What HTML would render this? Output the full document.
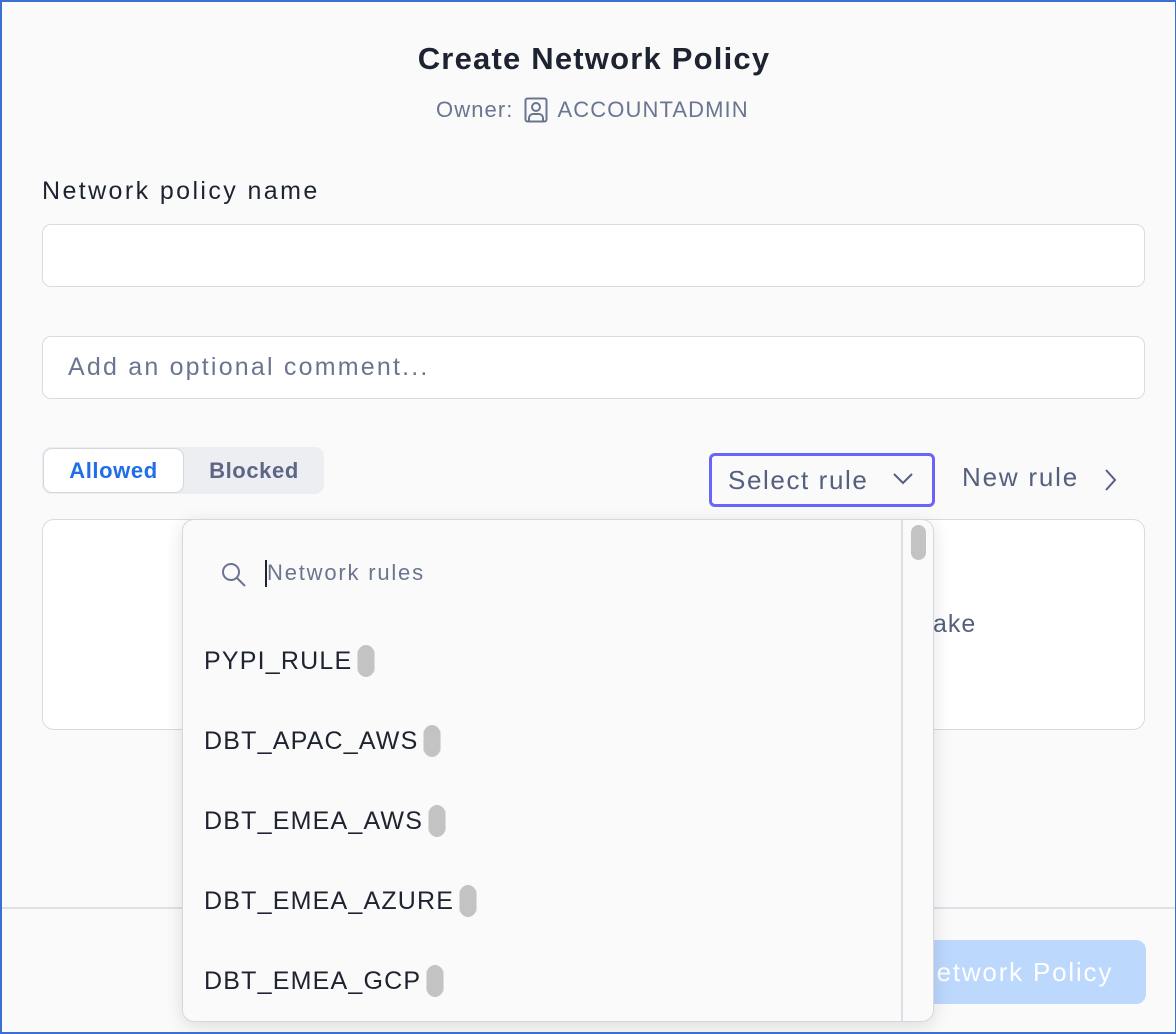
<!DOCTYPE html>
<html><head><meta charset="utf-8"><style>
*{box-sizing:border-box;margin:0;padding:0}
body{width:1176px;height:1034px;overflow:hidden;background:#fafafb;font-family:"Liberation Sans",sans-serif;position:relative}
.frame{position:absolute;inset:0;border:2px solid #3b6fd0;border-right-width:1px;pointer-events:none;z-index:10}
.abs{position:absolute}
.input{position:absolute;left:42px;width:1103px;height:63px;border:1px solid #d8dbe3;border-radius:9px;background:#fff}
.item{position:absolute;left:204px;font-size:25px;color:#1d2330;display:flex;align-items:center;letter-spacing:1.2px}
.pill{display:inline-block;width:16px;height:32px;background:#c3c3c3;border-radius:8px;margin-left:6px;box-shadow:-4px 0 0 -3px #ddd,4px 0 0 -3px #ddd}
</style></head><body>
<div class="frame"></div>
<div class="abs" style="left:0;top:41px;width:1188px;text-align:center;font-size:31px;font-weight:bold;color:#1d2330;letter-spacing:1.2px">Create Network Policy</div>
<div class="abs" style="left:436px;top:97px;font-size:22px;color:#6a7590;display:flex;align-items:center;gap:10px;letter-spacing:1.1px">Owner:
<svg width="24" height="26" viewBox="0 0 24 26"><rect x="1.5" y="1.5" width="21" height="23" rx="2" fill="none" stroke="#6a7590" stroke-width="2"/><circle cx="12" cy="10" r="4" fill="none" stroke="#6a7590" stroke-width="2"/><path d="M5 24v-3a4 4 0 0 1 4-4h6a4 4 0 0 1 4 4v3" fill="none" stroke="#6a7590" stroke-width="2"/></svg>
<span>ACCOUNTADMIN</span></div>
<div class="abs" style="left:42px;top:177px;font-size:25px;color:#1d2330;letter-spacing:2.4px">Network policy name</div>
<div class="input" style="top:224px"></div>
<div class="input" style="top:336px"><span class="abs" style="left:25px;top:16px;font-size:25px;color:#6a7590;letter-spacing:2.2px">Add an optional comment...</span></div>
<div class="abs" style="left:42px;top:447px;width:282px;height:47px;background:#eceef2;border-radius:9px"></div>
<div class="abs" style="left:43px;top:448px;width:141px;height:45px;background:#fff;border:1px solid #d3d7e2;border-radius:9px;color:#1f6fe6;font-weight:bold;font-size:22px;text-align:center;line-height:43px;letter-spacing:.6px">Allowed</div>
<div class="abs" style="left:184px;top:448px;width:140px;height:45px;color:#5d6785;font-weight:bold;font-size:22px;text-align:center;line-height:45px;letter-spacing:.6px">Blocked</div>
<div class="abs" style="left:709px;top:453px;width:226px;height:54px;border:3px solid #6a64f8;border-radius:6px;font-size:26px;color:#555f7e;padding-left:16px;line-height:48px;letter-spacing:1.6px">Select rule
<svg class="abs" style="left:180px;top:16px" width="22" height="14" viewBox="0 0 22 14"><path d="M2 2l9 9 9-9" fill="none" stroke="#555f7e" stroke-width="2"/></svg></div>
<div class="abs" style="left:962px;top:462px;font-size:26px;color:#555f7e;letter-spacing:1.8px">New rule</div>
<svg class="abs" style="left:1104px;top:468px" width="14" height="24" viewBox="0 0 14 24"><path d="M2 2l9 10-9 10" fill="none" stroke="#555f7e" stroke-width="2"/></svg>
<div class="abs" style="left:42px;top:519px;width:1103px;height:211px;border:1px solid #d8dbe3;border-radius:12px;background:#fff"></div>
<div class="abs" style="left:933px;top:610px;font-size:25px;color:#555f7e;letter-spacing:1px">ake</div>
<div class="abs" style="left:0;top:907px;width:1176px;height:2px;background:#dfe1e8"></div>
<div class="abs" style="left:880px;top:940px;width:266px;height:64px;background:#bcd8fd;border-radius:10px;color:#fff;font-size:26px;line-height:64px;padding-left:36px;letter-spacing:1.8px">Network Policy</div>
<div class="abs" style="left:182px;top:519px;width:752px;height:503px;background:#fafafa;border:1px solid #d6d8e0;border-radius:12px;box-shadow:0 4px 18px rgba(0,0,0,.12);z-index:5;overflow:hidden">
 <div class="abs" style="left:718px;top:0;width:2px;height:100%;background:#dcdee5"></div>
 <div class="abs" style="left:728px;top:5px;width:15px;height:35px;background:#c3c3c3;border-radius:8px"></div>
 <svg class="abs" style="left:37px;top:41px" width="28" height="28" viewBox="0 0 28 28"><circle cx="11" cy="11" r="8" fill="none" stroke="#6a7590" stroke-width="2"/><path d="M17 17l8 8" stroke="#6a7590" stroke-width="2"/></svg>
 <div class="abs" style="left:82px;top:40px;width:2px;height:27px;background:#1d2330"></div>
 <div class="abs" style="left:84px;top:40px;font-size:22px;color:#6a7590;letter-spacing:1.8px">Network rules</div>
</div>
<div style="position:absolute;inset:0;z-index:6;pointer-events:none">
<div class="item" style="top:645px">PYPI_RULE<span class="pill"></span></div>
<div class="item" style="top:725px">DBT_APAC_AWS<span class="pill"></span></div>
<div class="item" style="top:805px">DBT_EMEA_AWS<span class="pill"></span></div>
<div class="item" style="top:885px">DBT_EMEA_AZURE<span class="pill"></span></div>
<div class="item" style="top:965px">DBT_EMEA_GCP<span class="pill"></span></div>
</div>
</body></html>
